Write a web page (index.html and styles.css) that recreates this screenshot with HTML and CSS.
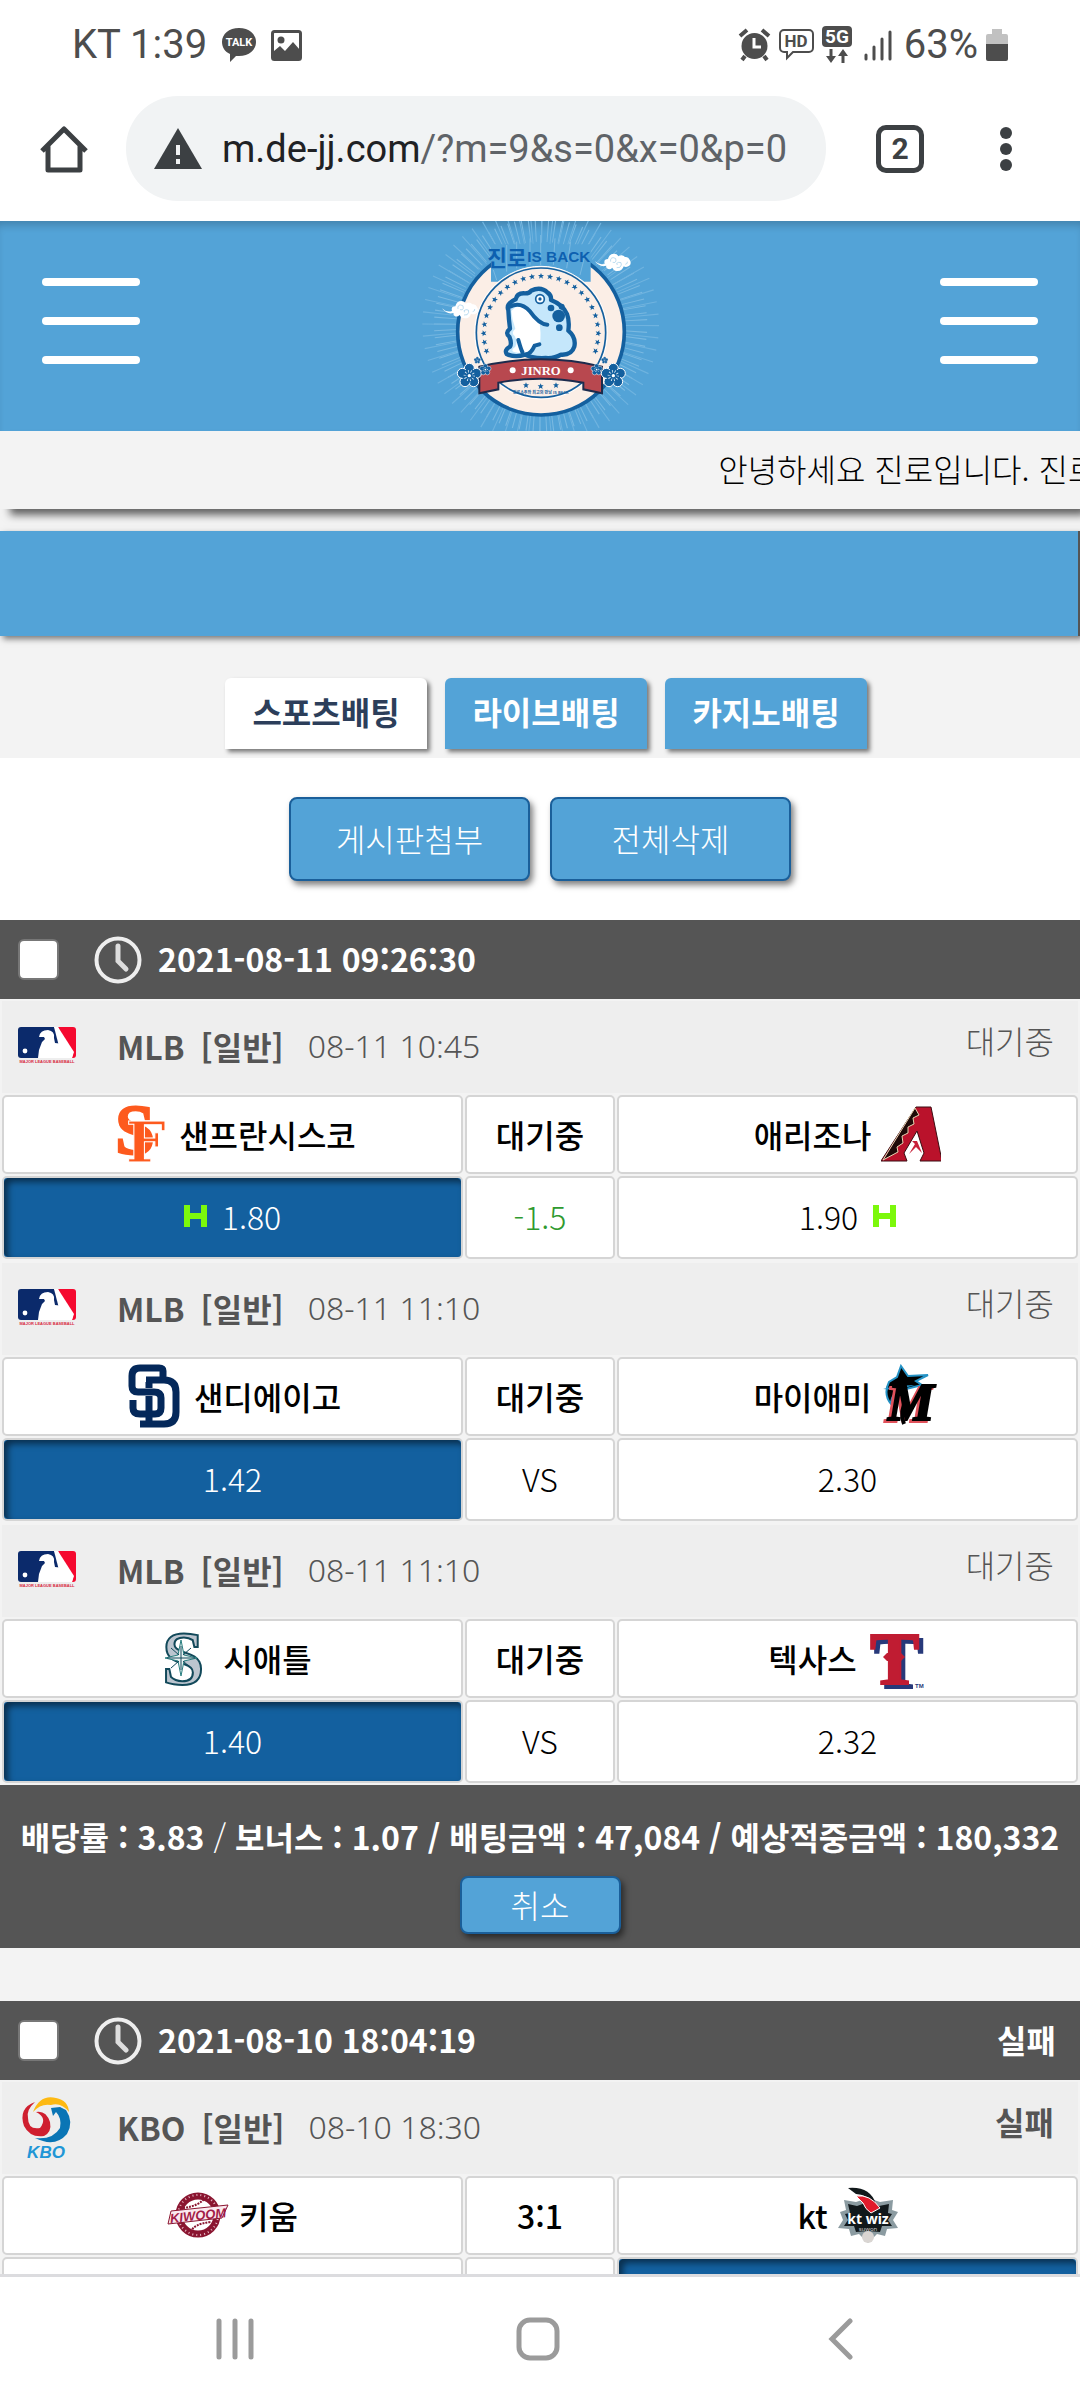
FILE: index.html
```html
<!DOCTYPE html>
<html lang="ko">
<head>
    <meta charset="utf-8">
    <meta name="viewport" content="width=device-width, initial-scale=1">
    <title>배팅내역</title>
    <link rel="stylesheet" href="styles.css">
</head>
<body>
    <!-- shared shapes -->
    <svg class="defs" aria-hidden="true">
        <symbol id="mlb" viewBox="0 0 58 37">
            <path d="M3 0h33l18 24-3 7H3a3 3 0 0 1-3-3V3a3 3 0 0 1 3-3z" fill="#0b2a6b"/>
            <path d="M40 0h15a3 3 0 0 1 3 3v25a3 3 0 0 1-3 3h-2z" fill="#f5092f"/>
            <path d="M36 0h4l16 25-2 6H44z" fill="#fff"/>
            <path d="M20 31l1-8 3-8 3-3-1-2h-5q1-7 9-7 7 1 6 8l1 5 9 1 9 9-1 5z" fill="#fff"/>
            <circle cx="7" cy="24" r="2.4" fill="#fff"/>
            <text x="29" y="36" class="mlb-text" text-anchor="middle">MAJOR LEAGUE BASEBALL</text>
        </symbol>
        <symbol id="clock" viewBox="0 0 48 48">
            <circle cx="24" cy="24" r="21.5" fill="none" stroke="#eee" stroke-width="4"/>
            <path d="M24 10v15l8 8" fill="none" stroke="#ddd" stroke-width="5" stroke-linecap="round"/>
        </symbol>
        <symbol id="handicap" viewBox="0 0 23 22">
            <path d="M3 0v22M20 0v22M3 11h17" fill="none" stroke="#7cf80c" stroke-width="6"/>
        </symbol>
        <symbol id="cloud" viewBox="0 0 110 60">
            <path d="M0 26q14 14 30 8-4-14 10-14 4-16 18-16 10 0 13 8 12-8 20 2 10-2 14 8 8 14-4 20-8 4-14 0-4 14-18 14-12 0-16-10-8 8-16 2-4-4-2-8-20 6-35-14z" fill="#fff"/>
            <path d="M48 28q-2-12 8-12t8 10q-2 7-10 4M66 46q12 2 14-8t-8-8-4 8M92 36q8-2 6-8" fill="none" stroke="#9dcbe8" stroke-width="2"/>
        </symbol>
        <symbol id="flower" viewBox="-42 -42 84 84">
            <g fill="#14609f" stroke="#fff" stroke-width="3">
                <circle cy="-22" r="15"/><circle cx="21" cy="-7" r="15"/><circle cx="13" cy="18" r="15"/>
                <circle cx="-13" cy="18" r="15"/><circle cx="-21" cy="-7" r="15"/>
            </g>
            <circle r="21" fill="#14609f"/>
            <circle r="13" fill="none" stroke="#fff" stroke-width="8" stroke-dasharray="2 6"/>
            <circle r="5" fill="#fff"/>
        </symbol>
        <polygon id="star" points="0,-9 2.5,-3 9,-3 4,1.5 6,8 0,4 -6,8 -4,1.5 -9,-3 -2.5,-3" fill="#14609f"/>
        <g id="stars">
            <use href="#star" transform="rotate(-18) translate(0 -172)"/>
            <use href="#star" transform="rotate(-9) translate(0 -172)"/>
            <use href="#star" transform="translate(0 -172)"/>
            <use href="#star" transform="rotate(9) translate(0 -172)"/>
            <use href="#star" transform="rotate(18) translate(0 -172)"/>
        </g>
    </svg>

    <div class="statusbar">
        <span>KT 1:39</span>
        <svg width="36" height="36" viewBox="0 0 36 36">
            <path d="M18 1c10 0 17 6 17 14s-7 14-17 14l-3 0-6 6 0-8C4 25 1 20 1 15 1 7 8 1 18 1z" fill="#4d4d4d"/>
            <text x="18" y="19" class="talk-text" text-anchor="middle">TALK</text>
        </svg>
        <svg width="31" height="31" viewBox="0 0 31 31">
            <rect x="1.5" y="1.5" width="28" height="28" rx="2" fill="none" stroke="#4d4d4d" stroke-width="3"/>
            <circle cx="10" cy="10" r="3.5" fill="#4d4d4d"/>
            <path d="M3 26V21l6-5 5 5 8-9 7 8v8H3z" fill="#4d4d4d"/>
        </svg>
        <div class="status-right">
            <svg width="33" height="34" viewBox="0 0 33 34">
                <circle cx="16.5" cy="18" r="13" fill="#4d4d4d"/>
                <path d="M2 8l7-6M24 2l7 6M7 28l-3 4M26 28l3 4" stroke="#4d4d4d" stroke-width="4"/>
                <path d="M16 10v9h7" fill="none" stroke="#fff" stroke-width="3"/>
            </svg>
            <svg width="35" height="34" viewBox="0 0 35 34">
                <path d="M5 2h25a4 4 0 0 1 4 4v14a4 4 0 0 1-4 4H14l-6 6v-6H5a4 4 0 0 1-4-4V6a4 4 0 0 1 4-4z" fill="none" stroke="#4d4d4d" stroke-width="2"/>
                <text x="17" y="19" class="hd-text" text-anchor="middle">HD</text>
            </svg>
            <svg width="30" height="38" viewBox="0 0 30 38">
                <rect width="30" height="21" rx="4" fill="#4d4d4d"/>
                <text x="15" y="17" class="g5-text" text-anchor="middle">5G</text>
                <path d="M9 23v10M21 37V27" stroke="#4d4d4d" stroke-width="3"/>
                <path d="M4 30h10l-5 7zM16 30h10l-5-7z" fill="#4d4d4d"/>
            </svg>
            <svg class="signal" width="28" height="34" viewBox="0 0 28 34">
                <path d="M2 27v4M10 19v12M18 11v20M26 4v27" stroke="#4d4d4d" stroke-width="3" stroke-linecap="round"/>
            </svg>
            <span>63%</span>
            <svg width="22" height="34" viewBox="0 0 22 34">
                <path d="M6 1h10v5h4a2 2 0 0 1 2 2v8H0V8a2 2 0 0 1 2-2h4z" fill="#c1c1c1"/>
                <path d="M0 16h22v15a2 2 0 0 1-2 2H2a2 2 0 0 1-2-2z" fill="#4d4d4d"/>
            </svg>
        </div>
    </div>

    <div class="browserbar">
        <button class="icon-btn" aria-label="홈">
            <svg width="48" height="48" viewBox="0 0 48 48">
                <path d="M2 26L24 4l22 22M8 21v24h32V21" fill="none" stroke="#3c4043" stroke-width="5" stroke-linejoin="round"/>
            </svg>
        </button>
        <button class="address">
            <svg width="48" height="42" viewBox="0 0 48 42">
                <path d="M24 0l24 41H0z" fill="#3c4043"/>
                <path d="M24 17v10M24 31v5" stroke="#f1f3f4" stroke-width="4"/>
            </svg>
            <span>m.de-jj.com<span class="query">/?m=9&amp;s=0&amp;x=0&amp;p=0</span></span>
        </button>
        <button class="icon-btn tabs-count" aria-label="탭">2</button>
        <button class="icon-btn" aria-label="메뉴">
            <svg width="12" height="44" viewBox="0 0 12 44">
                <g fill="#3c4043"><circle cx="6" cy="6" r="6"/><circle cx="6" cy="22" r="6"/><circle cx="6" cy="38" r="6"/></g>
            </svg>
        </button>
    </div>

    <main class="site">
        <header class="header">
            <button class="burger" aria-label="왼쪽 메뉴"><i></i><i></i><i></i></button>
            <a href="#" class="logo" aria-label="진로">
                <svg width="280" height="210" viewBox="0 18 840 630">
                    <circle cx="422" cy="330" r="285" fill="none" stroke="#7ab9e1" stroke-width="70" stroke-dasharray="3 15.65"/>
                    <circle cx="422" cy="330" r="300" fill="none" stroke="#6fb3df" stroke-width="110" stroke-dasharray="3 28.4"/>
                    <circle cx="423" cy="350" r="250" fill="#fbeee6" stroke="#14609f" stroke-width="11"/>
                    <path d="M273 88h299v112H273z" fill="#53a3d7"/>
                    <path d="M290 195l-10-30M320 170V90M350 160V80M390 150V70M422 150V60M460 150l5-80M500 160l12-80M540 180l15-60" stroke="#7ab9e1" stroke-width="3"/>
                    <circle cx="423" cy="353" r="199" fill="#fbeee6" stroke="#fff" stroke-width="3"/>
                    <circle cx="423" cy="353" r="194" fill="none" stroke="#14609f" stroke-width="5"/>
                    <g transform="translate(423 355)">
                        <use href="#stars" transform="rotate(-90)"/>
                        <use href="#stars" transform="rotate(-45)"/>
                        <use href="#stars"/>
                        <use href="#stars" transform="rotate(45)"/>
                        <use href="#stars" transform="rotate(90)"/>
                    </g>
                    <path d="M325 285q-8-18 22-32 4-20 28-18 14 0 18-8 30-14 50 6 12 8 10 22 36 14 48 42 8 20 4 50 24 20 18 48-8 26-40 24-20 12-46 10-40 2-62-10-30 10-55-2-8-12 10-22 6-10-2-30-14-10 2-24-4-30-5-56z" fill="#c5e7fb" stroke="#14609f" stroke-width="13" stroke-linejoin="round"/>
                    <path d="M334 288q18-22 46-8 24 16 38 42 6 30 2 65-22 2-28 22-24 8-50 2-12-4 4-16 8-14-2-32-12-10 2-22-10-26-12-53z" fill="#fff"/>
                    <path d="M330 275q32-16 60 14 26 38 52 40M355 375q8 28 12 36M378 418q14 0 26-26l14-4" fill="none" stroke="#14609f" stroke-width="12" stroke-linecap="round"/>
                    <circle cx="420" cy="252" r="13" fill="#fff" stroke="#14609f" stroke-width="5"/>
                    <circle cx="420" cy="252" r="5" fill="#14609f"/>
                    <g fill="#14609f"><circle cx="476" cy="303" r="19"/><circle cx="453" cy="279" r="10"/><circle cx="485" cy="275" r="9"/><circle cx="478" cy="338" r="10"/></g>
                    <path d="M238 455q185-44 368 0v80l-56-12v-20q-128-24-255 0v20l-57 12z" fill="#b8484f" stroke="#1c2b4d" stroke-width="6"/>
                    <circle cx="338" cy="466" r="9" fill="#fff"/><circle cx="512" cy="466" r="9" fill="#fff"/>
                    <text x="423" y="480" class="logo-name" text-anchor="middle">JINRO</text>
                    <use href="#star" x="378" y="511"/><use href="#star" x="422" y="514"/><use href="#star" x="468" y="511"/>
                    <text x="422" y="536" class="logo-small" text-anchor="middle">진로소주와 최고의 만남 IS BACK</text>
                    <text x="262" y="152" class="logo-title">진로</text>
                    <text x="382" y="142" class="logo-back">IS BACK</text>
                    <use href="#cloud" x="584" y="112" width="110" height="60"/>
                    <use href="#cloud" x="126" y="254" width="110" height="60"/>
                    <use href="#flower" x="166" y="440" width="84" height="84"/>
                    <use href="#flower" x="598" y="440" width="84" height="84"/>
                    <use href="#flower" x="236" y="444" width="40" height="40"/>
                    <use href="#flower" x="570" y="444" width="40" height="40"/>
                    <use href="#flower" x="220" y="424" width="24" height="24"/>
                    <use href="#flower" x="602" y="424" width="24" height="24"/>
                </svg>
            </a>
            <button class="burger" aria-label="오른쪽 메뉴"><i></i><i></i><i></i></button>
        </header>

        <div class="notice"><p>안녕하세요 진로입니다. 진로</p></div>
        <div class="bluebar"></div>

        <nav class="tabs">
            <a href="#" class="tab active">스포츠배팅</a>
            <a href="#" class="tab">라이브배팅</a>
            <a href="#" class="tab">카지노배팅</a>
        </nav>

        <div class="actions">
            <button class="btn">게시판첨부</button>
            <button class="btn">전체삭제</button>
        </div>

        <section class="bet">
            <div class="bet-head">
                <input type="checkbox" id="bet1">
                <svg width="48" height="48"><use href="#clock"/></svg>
                <label for="bet1">2021-08-11 09:26:30</label>
            </div>
            <table class="match">
                <colgroup><col class="side"><col class="mid"><col class="side"></colgroup>
                <tr class="league">
                    <td colspan="3">
                        <div class="league-row">
                            <svg class="league-logo" width="58" height="37"><use href="#mlb"/></svg>
                            <b class="league-name">MLB</b><b>[일반]</b><span class="date">08-11 10:45</span>
                            <span class="state">대기중</span>
                        </div>
                    </td>
                </tr>
                <tr class="teams">
                    <td><div class="team">
                        <svg width="60" height="64" viewBox="0 0 60 64">
                            <text x="6" y="52" class="sf-s">S</text>
                            <text x="17" y="60" class="sf-f">F</text>
                        </svg>
                        샌프란시스코</div></td>
                    <td>대기중</td>
                    <td><div class="team">애리조나
                        <svg width="60" height="64" viewBox="0 0 60 64">
                            <path d="M35 5h15l11 54H39l4-8-7-22-13 22 3 8H0z" fill="#ba122b" stroke="#3b0d12" stroke-width="1"/>
                            <path d="M34 6l4 7-6 3 1 6-6 3 0 6-6 3 1 7-6 4 1 5L2 58z" fill="#1e0a08" stroke="#e8d5b3" stroke-width="1"/>
                            <path d="M36 39l5 12-6-6-7 7 6-10-3-3z" fill="#c8213a"/>
                        </svg></div></td>
                </tr>
                <tr class="odds">
                    <td class="picked"><div class="odd"><svg width="23" height="22"><use href="#handicap"/></svg>1.80</div></td>
                    <td class="line">-1.5</td>
                    <td><div class="odd">1.90<svg width="23" height="22"><use href="#handicap"/></svg></div></td>
                </tr>
            </table>
            <table class="match">
                <colgroup><col class="side"><col class="mid"><col class="side"></colgroup>
                <tr class="league">
                    <td colspan="3">
                        <div class="league-row">
                            <svg class="league-logo" width="58" height="37"><use href="#mlb"/></svg>
                            <b class="league-name">MLB</b><b>[일반]</b><span class="date">08-11 11:10</span>
                            <span class="state">대기중</span>
                        </div>
                    </td>
                </tr>
                <tr class="teams">
                    <td><div class="team">
                        <svg width="60" height="64" viewBox="0 0 60 64">
                            <g fill="none" stroke="#04285a" stroke-width="7">
                                <path d="M39 14V7q0-3-4-3H16q-8 0-8 8v10q0 6 6 6h16q7 0 7 6v10q0 6-6 6H16q-7 0-7-6v-8M16 60h24q12 0 12-12V28q0-12-12-12H22M25 60V32M25 24v-6"/>
                            </g>
                        </svg>
                        샌디에이고</div></td>
                    <td>대기중</td>
                    <td><div class="team">마이애미
                        <svg width="60" height="64" viewBox="0 0 60 64">
                            <path d="M20 2l7 10 20-1-12 6 6 4-16 4Q10 28 10 40 2 30 8 18l8-5z" fill="#000" stroke="#2492c5" stroke-width="2"/>
                            <path d="M2 25l12-3 20-1-18 5z" fill="#2492c5"/>
                            <text x="4" y="58" class="mia-m mia-pink">M</text>
                            <text x="7" y="56" class="mia-m">M</text>
                            <path d="M26 34q-8 14-3 26" fill="none" stroke="#000" stroke-width="4"/>
                        </svg></div></td>
                </tr>
                <tr class="odds">
                    <td class="picked">1.42</td>
                    <td>VS</td>
                    <td>2.30</td>
                </tr>
            </table>
            <table class="match">
                <colgroup><col class="side"><col class="mid"><col class="side"></colgroup>
                <tr class="league">
                    <td colspan="3">
                        <div class="league-row">
                            <svg class="league-logo" width="58" height="37"><use href="#mlb"/></svg>
                            <b class="league-name">MLB</b><b>[일반]</b><span class="date">08-11 11:10</span>
                            <span class="state">대기중</span>
                        </div>
                    </td>
                </tr>
                <tr class="teams">
                    <td><div class="team">
                        <svg width="60" height="64" viewBox="0 0 60 64">
                            <text x="9" y="58" class="sea-s">S</text>
                            <path d="M28 14l3 15 13 3-13 3-3 15-3-15-13-3 13-3z" fill="#e9f2f2" stroke="#2a7f80" stroke-width="1"/>
                            <path d="M18 22l8 7M38 22l-8 7M18 42l8-7M38 42l-8-7M28 20v24M14 32h28" stroke="#12495a" stroke-width="1"/>
                        </svg>
                        시애틀</div></td>
                    <td>대기중</td>
                    <td><div class="team">텍사스
                        <svg width="60" height="64" viewBox="0 0 60 64">
                            <text x="3" y="58" class="tex-t">T</text>
                            <path d="M20 27l-4 4 4 4h14l4-4-4-4z" fill="#c01c32"/>
                            <text x="48" y="62" class="tex-tm">TM</text>
                        </svg></div></td>
                </tr>
                <tr class="odds">
                    <td class="picked">1.40</td>
                    <td>VS</td>
                    <td>2.32</td>
                </tr>
            </table>
            <div class="bet-foot">
                <p><b>배당률 : 3.83</b> / <b>보너스 : 1.07 / 배팅금액 : 47,084 / 예상적중금액 : 180,332</b></p>
                <button class="btn btn-cancel">취소</button>
            </div>
        </section>

        <section class="bet">
            <div class="bet-head">
                <input type="checkbox" id="bet2">
                <svg width="48" height="48"><use href="#clock"/></svg>
                <label for="bet2">2021-08-10 18:04:19</label>
                <span class="result">실패</span>
            </div>
            <table class="match">
                <colgroup><col class="side"><col class="mid"><col class="side"></colgroup>
                <tr class="league">
                    <td colspan="3">
                        <div class="league-row">
                            <svg class="league-logo" width="58" height="66" viewBox="0 0 58 66">
                                <path d="M17 8Q0 14 6 32q6 12 20 10 8-4 6-14-4-12-14-10 12 6 4 16-12 2-12-10-2-8 7-16z" fill="#cf1f2f"/>
                                <path d="M15 18Q22 0 38 4q12 2 13 14-8-10-18-7-10-2-18 7z" fill="#fdb913"/>
                                <path d="M48 16q8 12 1 24-12 14-32 4 18 2 25-10 2-10-4-16l-3 4-2-8 9-1z" fill="#0a75b5"/>
                                <text x="28" y="64" class="kbo-text" text-anchor="middle">KBO</text>
                            </svg>
                            <b class="league-name">KBO</b><b>[일반]</b><span class="date">08-10 18:30</span>
                            <b class="state">실패</b>
                        </div>
                    </td>
                </tr>
                <tr class="teams">
                    <td><div class="team">
                        <svg width="62" height="50" viewBox="0 0 62 50">
                            <circle cx="31" cy="25" r="19" fill="#fff" stroke="#8a1530" stroke-width="7"/>
                            <path d="M16 18q16-2 22-10M24 42q2-8 20-10" fill="none" stroke="#8a1530" stroke-width="2" stroke-dasharray="2 1"/>
                            <circle cx="31" cy="25" r="20" fill="none" stroke="#e6b8c4" stroke-width="2" stroke-dasharray="1 3"/>
                            <path d="M4 21l57-6-6 13-54 6z" fill="#fbe9f0" stroke="#8a1530" stroke-width="1"/>
                            <text x="31" y="30" class="kiwoom-text" text-anchor="middle" transform="rotate(-6 31 25)">KIWOOM</text>
                        </svg>
                        키움</div></td>
                    <td>3:1</td>
                    <td><div class="team">kt
                        <svg width="60" height="58" viewBox="0 0 60 58">
                            <path d="M6 14l12 2 12-4 12 4 13-2-1 10 6 2-5 8 5 8-11 1-2 7-8-2-9 9-9-9-8 2-2-7-11-1 5-8-3-8 6-2z" fill="#8b9ba1"/>
                            <path d="M10 18l9 2 11-4 11 4 10-2-1 9 4 1-4 6 4 6-10 0-2 6-12-1-12 1-2-6-10 0 4-6-3-6 5-1z" fill="#11181b"/>
                            <path d="M10 2q22-2 28 16Q28 8 18 8l-4-3z" fill="#11181b"/>
                            <path d="M18 10q14-2 24 12l-9 5q-6-4-8-10z" fill="#e11b2c" stroke="#fff" stroke-width="1"/>
                            <circle cx="30" cy="51" r="6" fill="#d9d5d2"/>
                            <text x="30" y="38" class="wiz-text" text-anchor="middle">kt wiz</text>
                            <text x="30" y="45" class="suwon-text" text-anchor="middle">suwon</text>
                        </svg></div></td>
                </tr>
                <tr class="odds">
                    <td></td>
                    <td></td>
                    <td class="picked"></td>
                </tr>
            </table>
        </section>
    </main>

    <nav class="navbar">
        <button class="icon-btn" aria-label="최근 앱">
            <svg width="42" height="42" viewBox="0 0 42 42"><path d="M5 3v36M21 3v36M37 3v36" stroke="#9b9b9b" stroke-width="5" stroke-linecap="round"/></svg>
        </button>
        <button class="icon-btn" aria-label="홈 화면">
            <svg width="44" height="44" viewBox="0 0 44 44"><rect x="3" y="3" width="38" height="38" rx="11" fill="none" stroke="#9b9b9b" stroke-width="5"/></svg>
        </button>
        <button class="icon-btn" aria-label="뒤로">
            <svg width="42" height="42" viewBox="0 0 42 42"><path d="M30 3L12 21l18 18" fill="none" stroke="#9b9b9b" stroke-width="5" stroke-linecap="round"/></svg>
        </button>
    </nav>
</body>
</html>
```
FILE: styles.css
```css
* {
    box-sizing: border-box;
}
body {
    margin: 0;
    height: 100vh;
    display: flex;
    flex-direction: column;
    overflow: hidden;
    background: #fff;
    font-family: "Noto Sans CJK KR", "Noto Sans", sans-serif;
    font-size: 32px;
    font-weight: 300;
    line-height: 40px;
    color: #000;
}
p {
    margin: 0;
}
b {
    font-weight: bold;
}
button {
    font: inherit;
    border: 0;
    padding: 0;
    background: none;
    cursor: pointer;
}
svg {
    display: block;
    flex-shrink: 0;
}
.defs {
    position: absolute;
    width: 0;
    height: 0;
}

/* phone and browser bars */
.statusbar {
    display: flex;
    align-items: center;
    gap: 14px;
    height: 90px;
    padding: 0 72px;
    font-family: Roboto, sans-serif;
    font-size: 40px;
    font-weight: 400;
    color: #4d4d4d;
    flex-shrink: 0;
}
.status-right {
    display: flex;
    align-items: center;
    gap: 8px;
    margin-left: auto;
}
.signal {
    margin: 0 4px;
}
.talk-text {
    font: bold 11px Roboto, sans-serif;
    fill: #fff;
}
.hd-text {
    font: bold 17px Roboto, sans-serif;
    fill: #4d4d4d;
}
.g5-text {
    font: bold 19px Roboto, sans-serif;
    fill: #fff;
}
.browserbar {
    display: flex;
    align-items: center;
    height: 131px;
    padding: 0 68px 14px 40px;
    flex-shrink: 0;
}
.icon-btn {
    display: flex;
    align-items: center;
    justify-content: center;
    flex-shrink: 0;
}
.address {
    display: flex;
    flex: 1;
    align-items: center;
    gap: 20px;
    height: 105px;
    margin-left: 38px;
    padding: 0 28px;
    border-radius: 52px;
    background: #f1f3f4;
    font-family: Roboto, sans-serif;
    font-size: 38px;
    font-weight: 400;
    white-space: nowrap;
    color: #202124;
}
.query {
    color: #5f6368;
}
.tabs-count {
    width: 48px;
    height: 48px;
    margin: 0 76px 0 50px;
    border: 5px solid #3c4043;
    border-radius: 10px;
    font: bold 30px Roboto, sans-serif;
    color: #3c4043;
}

/* site */
.site {
    flex: 1;
    min-height: 0;
    overflow: hidden;
    background: #f3f3f3;
}
.header {
    display: flex;
    align-items: center;
    justify-content: space-between;
    height: 210px;
    padding: 0 42px;
    background: #53a3d7;
    box-shadow: inset 0 8px 8px -4px rgba(0, 0, 0, 0.2);
}
.burger {
    display: flex;
    flex-direction: column;
    gap: 31px;
    width: 98px;
    padding-bottom: 10px;
}
.burger i {
    height: 8px;
    border-radius: 4px;
    background: #fff;
}
.logo-title {
    font: bold 64px "Noto Sans CJK KR", sans-serif;
    fill: #0d60b0;
}
.logo-back {
    font: bold 46px "Liberation Sans Narrow", "Liberation Sans", sans-serif;
    fill: #0d60b0;
}
.logo-name {
    font: bold 38px "Liberation Serif", serif;
    fill: #fff;
}
.logo-small {
    font: bold 12px "Noto Sans CJK KR", sans-serif;
    fill: #14609f;
}
.notice {
    height: 78px;
    padding: 17px 0;
    overflow: hidden;
    white-space: nowrap;
    background: #f3f3f3;
    box-shadow: 8px 8px 8px -2px rgba(0, 0, 0, 0.6);
}
.notice p {
    padding-left: 66.5%;
}
.bluebar {
    height: 105px;
    margin-top: 22px;
    border-right: 2px solid #555;
    background: #53a3d7;
    box-shadow: 3px 3px 6px rgba(0, 0, 0, 0.5);
}
.tabs {
    display: flex;
    justify-content: center;
    gap: 18px;
    padding: 42px 0 9px;
    margin-left: 12px;
}
.tab {
    width: 202px;
    padding: 13px 0 18px;
    border-radius: 6px 6px 0 0;
    background: #53a3d7;
    box-shadow: 3px 3px 4px rgba(0, 0, 0, 0.5);
    font-weight: bold;
    text-align: center;
    text-decoration: none;
    color: #fff;
}
.tab.active {
    background: #fff;
    color: #2c3e5a;
}
.actions {
    display: flex;
    justify-content: center;
    gap: 20px;
    padding: 39px 0;
    background: #fff;
}
.btn {
    width: 241px;
    height: 84px;
    padding-bottom: 3px;
    border: 2px solid #1a5f9a;
    border-radius: 8px;
    background: #53a3d7;
    box-shadow: 3px 4px 6px rgba(0, 0, 0, 0.5);
    color: #fff;
}

/* bet list */
.bet {
    margin-bottom: 53px;
}
.bet-head {
    display: flex;
    align-items: center;
    height: 79px;
    padding: 0 24px 0 18px;
    background: #555;
    color: #fff;
    font-weight: bold;
}
.bet-head input {
    appearance: none;
    width: 41px;
    height: 41px;
    margin: 0 35px 0 0;
    border: 2px solid #777;
    border-radius: 6px;
    background: #fff;
}
.bet-head label {
    margin-left: 16px;
    padding-bottom: 3px;
}
.result {
    margin-left: auto;
    padding-bottom: 3px;
}
.match {
    width: 100%;
    table-layout: fixed;
    border-collapse: separate;
    border-spacing: 2px;
}
.side {
    width: 43%;
}
.mid {
    width: 14%;
}
.match td {
    padding: 0;
    text-align: center;
}
.league td {
    height: 92px;
    background: #eee;
    color: #555;
}
.league-row {
    display: flex;
    align-items: center;
    height: 92px;
    padding: 0 24px 3px 16px;
}
.league-logo {
    margin-right: 41px;
}
.league-name {
    margin-right: 16px;
}
.date {
    margin-left: 24px;
    font-family: "Noto Sans", "Noto Sans CJK KR", sans-serif;
}
.state {
    margin-left: auto;
    padding-bottom: 12px;
}
.teams td,
.odds td {
    border: 2px solid #d5d5d5;
    border-radius: 5px;
    background: #fff;
}
.teams td {
    height: 79px;
    padding-bottom: 2px;
    font-weight: 500;
}
.odds td {
    height: 83px;
    padding-bottom: 4px;
}
.odds .picked {
    background: #13609f;
    box-shadow: inset 4px 4px 6px rgba(0, 0, 0, 0.5);
    color: #fff;
}
.odds .line {
    color: #2f9a2f;
}
.team {
    display: flex;
    align-items: center;
    justify-content: center;
    gap: 10px;
}
.odd {
    display: flex;
    align-items: center;
    justify-content: center;
    gap: 15px;
}
.bet-foot {
    padding: 31px 0 14px;
    background: #555;
    color: #fff;
    text-align: center;
    white-space: nowrap;
}
.btn-cancel {
    width: 161px;
    height: 58px;
    margin-top: 20px;
}

/* logo lettering */
.mlb-text {
    font: bold 4px "Liberation Sans", sans-serif;
    fill: #d8293f;
}
.sf-s {
    font: bold 72px "Liberation Serif", serif;
    fill: #fd5a1e;
    stroke: #fd5a1e;
    stroke-width: 2px;
}
.sf-f {
    font: bold 56px "DejaVu Serif", serif;
    fill: #fd5a1e;
    stroke: #fff;
    stroke-width: 1px;
}
.mia-m {
    font: italic bold 52px "Liberation Serif", serif;
    stroke: #000;
    stroke-width: 2px;
}
.mia-pink {
    fill: #e0525b;
    stroke: #e0525b;
}
.sea-s {
    font: bold 76px "Liberation Serif", serif;
    fill: #bcc5cf;
    stroke: #12495a;
    stroke-width: 2px;
}
.tex-t {
    font: bold 74px "Liberation Serif", serif;
    fill: #c01c32;
    stroke: #c01c32;
    stroke-width: 2px;
    filter: drop-shadow(4px 4px 0 #27397a);
}
.tex-tm {
    font: bold 6px "Liberation Sans", sans-serif;
    fill: #27397a;
}
.kbo-text {
    font: italic bold 17px "Liberation Sans", sans-serif;
    fill: #2196d6;
}
.kiwoom-text {
    font: italic bold 13px "Liberation Sans", sans-serif;
    fill: #a21c48;
}
.wiz-text {
    font: bold 14px "Noto Sans", sans-serif;
    fill: #fff;
}
.suwon-text {
    font: 6px "Noto Sans", sans-serif;
    fill: #ccc;
}

.navbar {
    display: flex;
    align-items: center;
    justify-content: center;
    gap: 260px;
    height: 126px;
    padding-right: 4px;
    border-top: 3px solid #dcdcdf;
    flex-shrink: 0;
}
```
